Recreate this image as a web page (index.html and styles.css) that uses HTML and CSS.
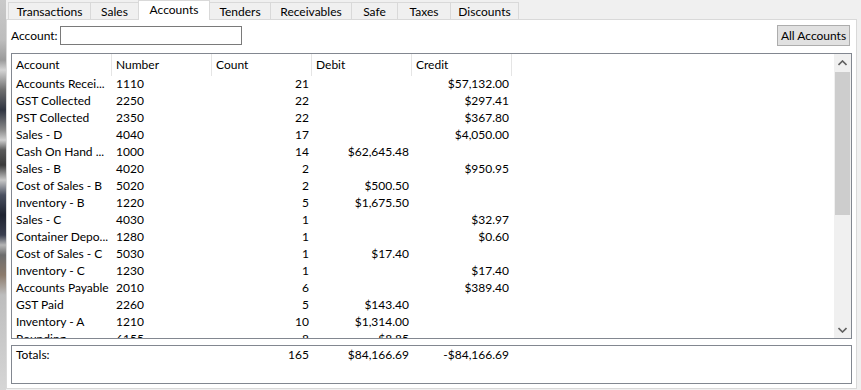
FILE: index.html
```html
<!DOCTYPE html>
<html>
<head>
<meta charset="utf-8">
<link rel="stylesheet" href="styles.css">
</head>
<body>
<div class="app">
  <div class="edge"></div>
  <div class="window">
    <div class="tabs">
      <div class="tab tab-transactions">Transactions</div>
      <div class="tab tab-sales">Sales</div>
      <div class="tab tab-accounts selected">Accounts</div>
      <div class="tab tab-tenders">Tenders</div>
      <div class="tab tab-receivables">Receivables</div>
      <div class="tab tab-safe">Safe</div>
      <div class="tab tab-taxes">Taxes</div>
      <div class="tab tab-discounts">Discounts</div>
    </div>
    <div class="panel">
      <div class="toolbar">
        <label class="field-label">Account:</label>
        <div class="textbox"></div>
        <div class="spacer"></div>
        <button class="btn">All Accounts</button>
      </div>
      <div class="list">
        <div class="list-main">
          <div class="list-head">
            <div class="hcell">Account</div>
            <div class="hcell">Number</div>
            <div class="hcell">Count</div>
            <div class="hcell">Debit</div>
            <div class="hcell">Credit</div>
          </div>
          <div class="list-body">
            <div class="row"><span class="c">Accounts Recei...</span><span class="c">1110</span><span class="c num">21</span><span class="c num"></span><span class="c num">$57,132.00</span></div>
            <div class="row"><span class="c">GST Collected</span><span class="c">2250</span><span class="c num">22</span><span class="c num"></span><span class="c num">$297.41</span></div>
            <div class="row"><span class="c">PST Collected</span><span class="c">2350</span><span class="c num">22</span><span class="c num"></span><span class="c num">$367.80</span></div>
            <div class="row"><span class="c">Sales - D</span><span class="c">4040</span><span class="c num">17</span><span class="c num"></span><span class="c num">$4,050.00</span></div>
            <div class="row"><span class="c">Cash On Hand ...</span><span class="c">1000</span><span class="c num">14</span><span class="c num">$62,645.48</span><span class="c num"></span></div>
            <div class="row"><span class="c">Sales - B</span><span class="c">4020</span><span class="c num">2</span><span class="c num"></span><span class="c num">$950.95</span></div>
            <div class="row"><span class="c">Cost of Sales - B</span><span class="c">5020</span><span class="c num">2</span><span class="c num">$500.50</span><span class="c num"></span></div>
            <div class="row"><span class="c">Inventory - B</span><span class="c">1220</span><span class="c num">5</span><span class="c num">$1,675.50</span><span class="c num"></span></div>
            <div class="row"><span class="c">Sales - C</span><span class="c">4030</span><span class="c num">1</span><span class="c num"></span><span class="c num">$32.97</span></div>
            <div class="row"><span class="c">Container Depo...</span><span class="c">1280</span><span class="c num">1</span><span class="c num"></span><span class="c num">$0.60</span></div>
            <div class="row"><span class="c">Cost of Sales - C</span><span class="c">5030</span><span class="c num">1</span><span class="c num">$17.40</span><span class="c num"></span></div>
            <div class="row"><span class="c">Inventory - C</span><span class="c">1230</span><span class="c num">1</span><span class="c num"></span><span class="c num">$17.40</span></div>
            <div class="row"><span class="c">Accounts Payable</span><span class="c">2010</span><span class="c num">6</span><span class="c num"></span><span class="c num">$389.40</span></div>
            <div class="row"><span class="c">GST Paid</span><span class="c">2260</span><span class="c num">5</span><span class="c num">$143.40</span><span class="c num"></span></div>
            <div class="row"><span class="c">Inventory - A</span><span class="c">1210</span><span class="c num">10</span><span class="c num">$1,314.00</span><span class="c num"></span></div>
            <div class="row"><span class="c">Rounding</span><span class="c">6155</span><span class="c num">8</span><span class="c num">$8.85</span><span class="c num"></span></div>
          </div>
        </div>
        <div class="scrollbar">
          <div class="sb-btn">
            <svg width="9" height="6" viewBox="0 0 9 6"><path d="M0.5 5 L4.5 1 L8.5 5" fill="none" stroke="#606060" stroke-width="1.6"/></svg>
          </div>
          <div class="sb-track">
            <div class="sb-thumb"></div>
          </div>
          <div class="sb-btn">
            <svg width="9" height="6" viewBox="0 0 9 6"><path d="M0.5 1 L4.5 5 L8.5 1" fill="none" stroke="#606060" stroke-width="1.6"/></svg>
          </div>
        </div>
      </div>
      <div class="totals">
        <div class="row">
          <span class="c">Totals:</span><span class="c"></span><span class="c num">165</span><span class="c num">$84,166.69</span><span class="c num">-$84,166.69</span>
        </div>
      </div>
    </div>
  </div>
</div>
</body>
</html>
```

FILE: styles.css
```css
* { box-sizing: border-box; }
html, body {
  margin: 0;
  padding: 0;
  background: #f0f0f0;
}
body {
  font-family: "Lato", "Noto Sans", sans-serif;
  font-size: 12px;
  color: #000;
}
.app {
  display: flex;
  width: 861px;
  height: 390px;
  overflow: hidden;
}
.edge {
  width: 6px;
  flex: none;
  background: linear-gradient(to bottom,
    #c9c9c9 0px, #bdbdbd 40px, #9a9a9a 60px, #d4d4d4 70px,
    #6e6e6e 90px, #2f3440 110px, #8b8b8b 130px, #cfcfcf 140px,
    #5a5a5a 150px, #3b3b3b 165px, #c8c8c8 180px,
    #4a5060 195px, #1f2330 215px, #3a3f4f 235px, #b5b5b5 245px,
    #6c6c6c 255px, #8c7b6c 275px, #bdbdbd 295px, #d6d6d6 390px);
}
.window {
  flex: 1;
  display: flex;
  flex-direction: column;
  padding-right: 4px;
}
.tabs {
  height: 19px;
  display: flex;
  align-items: flex-end;
  padding-left: 2px;
  flex: none;
}
.tab {
  height: 17px;
  border: 1px solid #d9d9d9;
  border-bottom: none;
  background: #f0f0f0;
  margin-left: -1px;
  display: flex;
  align-items: center;
  justify-content: center;
  line-height: 1;
  padding-top: 1px;
  white-space: nowrap;
}
.tab-transactions { width: 83px; margin-left: 0; }
.tab-sales { width: 49px; }
.tab-accounts { width: 72px; }
.tab-tenders { width: 62px; }
.tab-receivables { width: 82px; }
.tab-safe { width: 47px; }
.tab-taxes { width: 54px; }
.tab-discounts { width: 69px; }
.tab.selected {
  height: 20px;
  background: #fff;
  margin-bottom: -1px;
  position: relative;
  z-index: 1;
  padding-top: 0;
  padding-bottom: 2px;
}
.panel {
  height: 370px;
  border: 1px solid #d9d9d9;
  background: #fff;
  display: flex;
  flex-direction: column;
  padding: 0 4px;
}
.toolbar {
  margin-top: 5px;
  height: 21px;
  display: flex;
  align-items: center;
  flex: none;
}
.field-label {
  width: 49px;
  flex: none;
}
.textbox {
  width: 182px;
  height: 19px;
  border: 1px solid #7a7a7a;
  background: #fff;
}
.spacer { flex: 1; }
.btn {
  width: 73px;
  height: 21px;
  margin-right: 2px;
  background: #e1e1e1;
  border: 1px solid #adadad;
  font-family: inherit;
  font-size: 12px;
  color: #000;
  padding: 0;
  line-height: 1;
}
.list {
  margin-top: 7px;
  height: 286px;
  border: 1px solid #828790;
  display: flex;
  flex: none;
  background: #fff;
}
.list-main {
  flex: 1;
  overflow: hidden;
  display: flex;
  flex-direction: column;
}
.list-head {
  display: flex;
  height: 22px;
  flex: none;
}
.hcell {
  width: 100px;
  border-right: 1px solid #e5e5e5;
  padding-left: 4px;
  display: flex;
  align-items: center;
  padding-bottom: 1px;
}
.list-body {
  flex: 1;
  overflow: hidden;
}
.row {
  display: grid;
  grid-template-columns: 100px 100px 100px 100px 100px;
  height: 17px;
  line-height: 15px;
  white-space: nowrap;
}
.c {
  padding-left: 4px;
  overflow: hidden;
}
.c.num {
  text-align: right;
  padding-left: 0;
  padding-right: 3px;
}
.scrollbar {
  width: 17px;
  flex: none;
  background: #f0f0f0;
  display: flex;
  flex-direction: column;
}
.sb-btn {
  height: 17px;
  display: flex;
  align-items: center;
  justify-content: center;
  flex: none;
}
.sb-track {
  flex: 1;
  padding: 1px 1px 0 1px;
}
.sb-thumb {
  height: 143px;
  background: #cdcdcd;
}
.totals {
  margin-top: 6px;
  height: 39px;
  border: 1px solid #828790;
  flex: none;
}
.totals .row {
  line-height: 17px;
}
```
